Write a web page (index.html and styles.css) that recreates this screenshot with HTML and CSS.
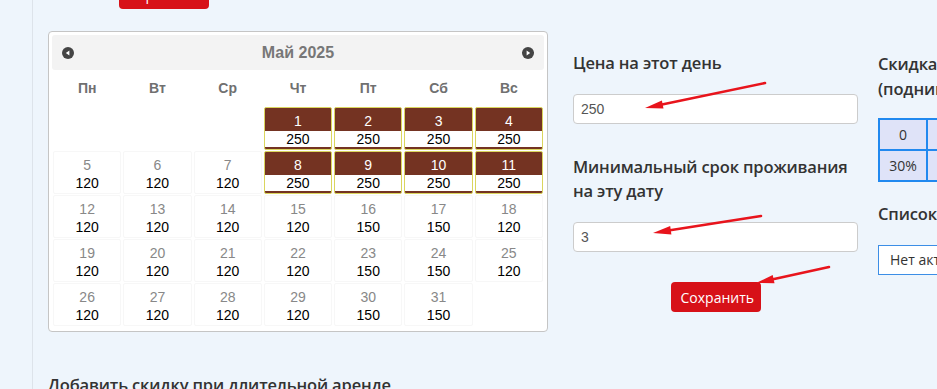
FILE: index.html
```html
<!DOCTYPE html>
<html lang="ru">
<head>
<meta charset="utf-8">
<title>Календарь цен</title>
<link rel="stylesheet" href="styles.css">
</head>
<body>
<div class="page">
  <div class="rail"></div>
  <main class="main">
    <div class="top-actions"><button class="btn btn-top">Сохранить</button></div>
    <div class="editor">
      <div class="calendar">
        <div class="cal-header">
          <svg class="cal-nav" width="12" height="12" viewBox="0 0 12 12"><circle cx="6" cy="6" r="6" fill="#444"/><polygon points="3.8,6 7.4,3.4 7.4,8.6" fill="#fff"/></svg>
          <span class="cal-title">Май 2025</span>
          <svg class="cal-nav" width="12" height="12" viewBox="0 0 12 12"><circle cx="6" cy="6" r="6" fill="#444"/><polygon points="8.2,6 4.6,3.4 4.6,8.6" fill="#fff"/></svg>
        </div>
        <table class="cal-table">
          <thead>
            <tr><th>Пн</th><th>Вт</th><th>Ср</th><th>Чт</th><th>Пт</th><th>Сб</th><th>Вс</th></tr>
          </thead>
          <tbody>
            <tr>
              <td></td><td></td><td></td>
              <td><a class="day is-set"><span class="day-num">1</span><span class="day-price">250</span></a></td>
              <td><a class="day is-set"><span class="day-num">2</span><span class="day-price">250</span></a></td>
              <td><a class="day is-set"><span class="day-num">3</span><span class="day-price">250</span></a></td>
              <td><a class="day is-set"><span class="day-num">4</span><span class="day-price">250</span></a></td>
            </tr>
            <tr>
              <td><a class="day"><span class="day-num">5</span><span class="day-price">120</span></a></td>
              <td><a class="day"><span class="day-num">6</span><span class="day-price">120</span></a></td>
              <td><a class="day"><span class="day-num">7</span><span class="day-price">120</span></a></td>
              <td><a class="day is-set"><span class="day-num">8</span><span class="day-price">250</span></a></td>
              <td><a class="day is-set"><span class="day-num">9</span><span class="day-price">250</span></a></td>
              <td><a class="day is-set"><span class="day-num">10</span><span class="day-price">250</span></a></td>
              <td><a class="day is-set"><span class="day-num">11</span><span class="day-price">250</span></a></td>
            </tr>
            <tr>
              <td><a class="day"><span class="day-num">12</span><span class="day-price">120</span></a></td>
              <td><a class="day"><span class="day-num">13</span><span class="day-price">120</span></a></td>
              <td><a class="day"><span class="day-num">14</span><span class="day-price">120</span></a></td>
              <td><a class="day"><span class="day-num">15</span><span class="day-price">120</span></a></td>
              <td><a class="day"><span class="day-num">16</span><span class="day-price">150</span></a></td>
              <td><a class="day"><span class="day-num">17</span><span class="day-price">150</span></a></td>
              <td><a class="day"><span class="day-num">18</span><span class="day-price">120</span></a></td>
            </tr>
            <tr>
              <td><a class="day"><span class="day-num">19</span><span class="day-price">120</span></a></td>
              <td><a class="day"><span class="day-num">20</span><span class="day-price">120</span></a></td>
              <td><a class="day"><span class="day-num">21</span><span class="day-price">120</span></a></td>
              <td><a class="day"><span class="day-num">22</span><span class="day-price">120</span></a></td>
              <td><a class="day"><span class="day-num">23</span><span class="day-price">150</span></a></td>
              <td><a class="day"><span class="day-num">24</span><span class="day-price">150</span></a></td>
              <td><a class="day"><span class="day-num">25</span><span class="day-price">120</span></a></td>
            </tr>
            <tr>
              <td><a class="day"><span class="day-num">26</span><span class="day-price">120</span></a></td>
              <td><a class="day"><span class="day-num">27</span><span class="day-price">120</span></a></td>
              <td><a class="day"><span class="day-num">28</span><span class="day-price">120</span></a></td>
              <td><a class="day"><span class="day-num">29</span><span class="day-price">120</span></a></td>
              <td><a class="day"><span class="day-num">30</span><span class="day-price">150</span></a></td>
              <td><a class="day"><span class="day-num">31</span><span class="day-price">150</span></a></td>
              <td></td>
            </tr>
          </tbody>
        </table>
      </div>

      <div class="day-form">
        <p class="field-label">Цена на этот день</p>
        <input class="field-input" type="text" value="250">
        <p class="field-label field-label-gap">Минимальный срок проживания на эту дату</p>
        <input class="field-input" type="text" value="3">
        <button class="btn btn-save">Сохранить</button>
      </div>

      <div class="discounts">
        <p class="field-label field-label-tall">Скидка при длительном проживании<br>(поднимается с количеством ночей)</p>
        <table class="discount-table">
          <tr><td>0</td><td>7</td><td>14</td><td>30</td></tr>
          <tr><td>30%</td><td>10%</td><td>15%</td><td>20%</td></tr>
        </table>
        <p class="field-label field-label-list">Список активных скидок</p>
        <div class="discount-select">Нет активных скидок</div>
      </div>
    </div>
    <h2 class="section-title">Добавить скидку при длительной аренде</h2>
  </main>
</div>

<svg class="annotations" width="937" height="389" viewBox="0 0 937 389">
  <g stroke="#e8141c" stroke-width="2.6" stroke-linecap="round" fill="#e8141c">
    <line x1="765" y1="83" x2="662" y2="104.5"/>
    <polygon stroke="none" points="645,108 663.5,108.6 661.9,100.4"/>
    <line x1="761" y1="216" x2="670" y2="230.2"/>
    <polygon stroke="none" points="653,233 671.4,234.4 670.2,226.1"/>
    <line x1="829" y1="267" x2="773" y2="279.2"/>
    <polygon stroke="none" points="756,283 774.5,283.2 772.7,275"/>
  </g>
</svg>
</body>
</html>
```

FILE: styles.css
```css
html, body {
  margin: 0;
  overflow: hidden;
}

body {
  background: #eef5fc;
  font-family: "Open Sans", "Noto Sans", sans-serif;
  color: #333;
  position: relative;
}

.page {
  display: flex;
  min-height: 389px;
}

.rail {
  flex: none;
  width: 32px;
  border-right: 1px solid #dde3ea;
}

.main {
  flex: 1;
  min-width: 0;
  padding-left: 15px;
}

.top-actions {
  display: flex;
  margin-top: -21px;
  padding-left: 71px;
}

.btn {
  font-family: "Open Sans", sans-serif;
  font-size: 14px;
  color: #fff;
  background: #d71118;
  border: 0;
  border-radius: 4px;
  height: 30px;
  padding: 0 10px;
}

.btn-top {
  width: 90px;
  padding: 0 0 0 2px;
  text-align: left;
}

.editor {
  display: flex;
  align-items: flex-start;
  margin-top: 22px;
}

/* calendar */
.calendar {
  flex: none;
  width: 500px;
  box-sizing: border-box;
  background: #fff;
  border: 1px solid #c5c5c5;
  border-radius: 4px;
  padding: 3px;
  font-family: "Liberation Sans", Arial, sans-serif;
}

.cal-header {
  height: 35px;
  box-sizing: border-box;
  background: #f3f3f3;
  border-radius: 3px;
  padding: 0 10px;
  display: flex;
  align-items: center;
  justify-content: space-between;
}

.cal-nav {
  display: block;
}

.cal-title {
  font-size: 16px;
  font-weight: bold;
  color: #777;
}

.cal-table {
  width: 100%;
  border-collapse: collapse;
  table-layout: fixed;
  margin-bottom: 2px;
}

.cal-table th {
  height: 36px;
  padding: 0;
  font-size: 14px;
  font-weight: bold;
  color: #707070;
}

.cal-table td {
  padding: 1px 1px 0;
}

.day {
  display: block;
  height: 43px;
  box-sizing: border-box;
  border: 1px solid #f7f7f7;
  border-radius: 2px;
  background: #fff;
  text-align: center;
  padding-bottom: 2px;
}

.day-num {
  display: block;
  padding-top: 4px;
  line-height: 19px;
  font-size: 14px;
  color: #888;
}

.day-price {
  display: block;
  line-height: 16px;
  font-size: 14px;
  color: #000;
}

.day.is-set {
  background: #743322;
  border-color: #dad55e;
}

.day.is-set .day-num {
  color: #fff;
}

.day.is-set .day-price {
  background: #fff;
}

/* day form */
.day-form {
  flex: none;
  width: 285px;
  margin-left: 25px;
  padding-top: 20px;
}

.field-label {
  margin: 0;
  font-size: 16.5px;
  font-weight: 600;
  line-height: 24px;
  letter-spacing: -0.15px;
  color: #333;
}

.field-label-gap {
  margin-top: 31px;
}

.field-input {
  display: block;
  width: 100%;
  box-sizing: border-box;
  height: 30px;
  margin: 19px 0 0;
  padding: 0 7px;
  border: 1px solid #ccc;
  border-radius: 4px;
  background: #fff;
  font-family: "Liberation Sans", Arial, sans-serif;
  font-size: 14px;
  color: #555;
}

.btn-save {
  display: block;
  margin: 30px auto 0;
  width: 90px;
}

/* discounts */
.discounts {
  flex: none;
  width: 420px;
  margin-left: 20px;
  padding-top: 20px;
}

.field-label-tall {
  line-height: 25px;
  white-space: nowrap;
}

.field-label-list {
  margin-top: 20px;
  white-space: nowrap;
}

.discount-table {
  margin-top: 17px;
  border-collapse: collapse;
  border: 2px solid #2189ef;
}

.discount-table td {
  width: 46px;
  height: 29px;
  padding: 0;
  border: 2px solid #2189ef;
  background: #dfe3f8;
  text-align: center;
  font-size: 14px;
  color: #333;
}

.discount-select {
  margin-top: 19px;
  width: 400px;
  height: 30px;
  box-sizing: border-box;
  border: 1px solid #3c8ee6;
  background: #fff;
  padding-left: 11px;
  font-size: 14px;
  line-height: 28px;
  color: #333;
  white-space: nowrap;
}

.section-title {
  margin: 41px 0 0;
  font-size: 16.5px;
  font-weight: 600;
  line-height: 24px;
  letter-spacing: -0.15px;
  color: #333;
}

.annotations {
  position: absolute;
  top: 0;
  left: 0;
  pointer-events: none;
}
```
